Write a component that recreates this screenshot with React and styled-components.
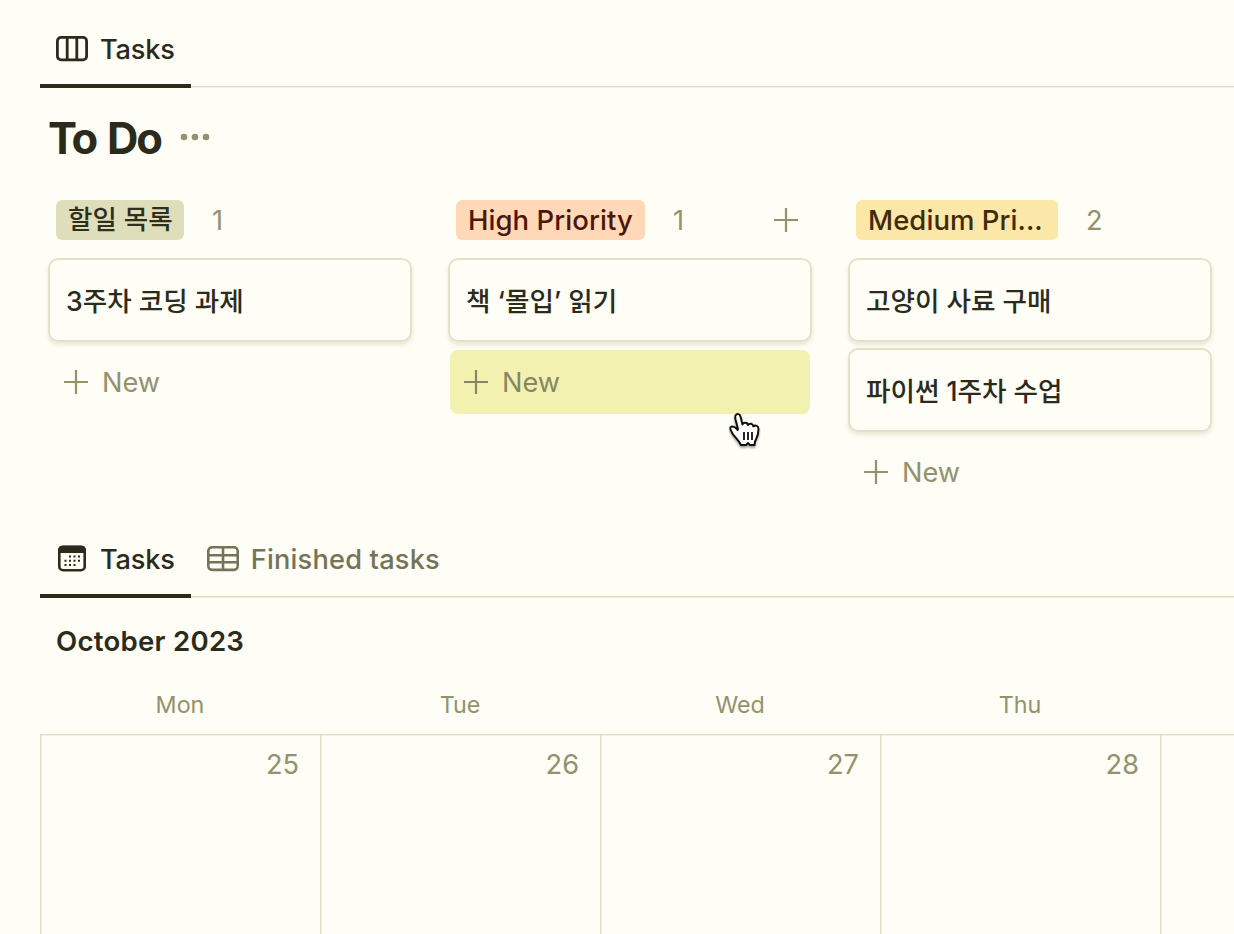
import React from "react";
import styled, { createGlobalStyle } from "styled-components";

const GlobalStyle = createGlobalStyle`
  * {
    box-sizing: border-box;
  }
  body {
    margin: 0;
    background: #fefdf6;
    color: #2b2b1c;
    font-family: "Inter", "Noto Sans CJK KR", sans-serif;
    overflow: hidden;
  }
`;

const Page = styled.div`
  width: 1234px;
  height: 934px;
  padding-left: 40px;
  position: relative;
  overflow: hidden;
  white-space: nowrap;
`;

const TabBar = styled.div`
  display: flex;
  height: 88px;
  padding-top: 14px;
  box-shadow: inset 0 -1px 0 #f0f0dc, inset 0 -2px 0 #dedec6;
`;

const Tab = styled.div`
  display: flex;
  align-items: center;
  padding: 0 16px;
  height: 74px;
  gap: 12px;
  border-bottom: 4px solid ${(props) => (props.$active ? "#2b2b1a" : "transparent")};
  color: ${(props) => (props.$active ? "#2b2b1c" : "#747456")};
  font-size: 27.2px;
  font-weight: 500;
  letter-spacing: ${(props) => (props.$active ? "-0.2px" : "0.2px")};

  svg {
    flex: none;
    margin-bottom: 1px;
  }
`;

const TitleRow = styled.div`
  display: flex;
  align-items: center;
  height: 100px;
  padding-left: 8px;
  gap: 18px;
`;

const Title = styled.h1`
  margin: 0;
  width: 114px;
  font-size: 43.5px;
  font-weight: 700;
  letter-spacing: -2.2px;
  word-spacing: 3px;
`;

const Board = styled.div`
  display: flex;
  gap: 36px;
  height: 322px;
  padding: 12px 0 0 8px;
`;

const Column = styled.div`
  flex: none;
  width: 364px;
`;

const ColumnHeader = styled.div`
  display: flex;
  align-items: center;
  height: 40px;
  margin-bottom: 18px;
  padding: 0 14px 0 8px;
`;

const Tag = styled.span`
  width: ${(props) => props.$width}px;
  height: 40px;
  padding: 0 12px;
  border-radius: 6px;
  background: ${(props) => props.$bg};
  color: ${(props) => props.$color};
  font-size: ${(props) => (props.$korean ? "26.5px" : "27.5px")};
  font-weight: 500;
  line-height: ${(props) => (props.$korean ? "39px" : "41px")};
  letter-spacing: ${(props) => (props.$korean ? "0" : "0.05px")};
`;

const Count = styled.span`
  flex: 1;
  margin-left: 28px;
  font-size: 27.2px;
  color: #92926c;
`;

const AddButton = styled.span`
  display: flex;
  color: #92926c;
`;

const Card = styled.div`
  display: flex;
  align-items: center;
  height: 84px;
  margin-bottom: 6px;
  border: 2px solid #e2e2cb;
  border-radius: 10px;
  padding: 0 16px 2px;
  font-size: 26.6px;
  font-weight: 500;
  box-shadow: 0 3px 4px rgba(110, 110, 0, 0.14);
`;

const NewButton = styled.div`
  display: flex;
  align-items: center;
  gap: 14px;
  height: 64px;
  margin: 8px 2px 0;
  padding-left: 14px;
  border-radius: 8px;
  background: ${(props) => (props.$hover ? "#f2f1b0" : "transparent")};
  color: ${(props) => (props.$hover ? "#878762" : "#92926c")};
  font-size: 27.2px;
`;

const Month = styled.div`
  height: 88px;
  padding-left: 16px;
  line-height: 86px;
  font-size: 27.6px;
  font-weight: 600;
  letter-spacing: 0.25px;
`;

const Week = styled.div`
  display: grid;
  grid-template-columns: repeat(5, 280px);
  width: 1400px;
`;

const Weekday = styled.div`
  height: 48px;
  line-height: 38px;
  text-align: center;
  font-size: 23.3px;
  color: #92926c;
`;

const Day = styled.div`
  height: 200px;
  padding: 16px 21px 0 0;
  box-shadow: inset 1px 1px 0 #dedec6, inset 2px 2px 0 #f0f0dc;
  text-align: right;
  line-height: 30px;
  font-size: 27.2px;
  color: #92926c;
`;

const Pointer = styled.svg`
  position: absolute;
  left: 728px;
  top: 411px;
  filter: drop-shadow(0 2px 1px rgba(0, 0, 0, 0.35));
`;

const BoardIcon = () => (
  <svg width="32" height="26" viewBox="0 0 32 26" fill="none" stroke="currentColor" strokeWidth="2.8">
    <rect x="1.4" y="1.4" width="29.2" height="22.4" rx="3.6" />
    <path d="M11.2 2v22M20.8 2v22" />
  </svg>
);

const CalendarIcon = () => (
  <svg width="32" height="28" viewBox="0 0 32 28" fill="none">
    <rect x="3.3" y="2" width="25.4" height="23.2" rx="3.8" stroke="currentColor" strokeWidth="2.6" />
    <path d="M2 8V5.600q0-5 5-5h18q5 0 5 5v2.400z" fill="currentColor" />
    <path
      d="M13 11.500h2M17.500 11.500h2M22 11.500h2M8.500 15.700h2M13 15.700h2M17.500 15.700h2M22 15.700h2M8.500 20h2M13 20h2M17.500 20h2"
      stroke="currentColor"
      strokeWidth="2"
    />
  </svg>
);

const TableIcon = () => (
  <svg width="32" height="26" viewBox="0 0 32 26" fill="none" stroke="currentColor" strokeWidth="2.6">
    <rect x="1.3" y="1.3" width="29.4" height="22.6" rx="3.8" />
    <path d="M2 9.2h28M2 16.2h28M16 2v22" />
  </svg>
);

const PlusIcon = () => (
  <svg width="24" height="24" viewBox="0 0 24 24" stroke="currentColor" strokeWidth="2.2">
    <path d="M0 12h24M12 0v24" />
  </svg>
);

const DotsIcon = () => (
  <svg width="30" height="10" viewBox="0 0 30 10" fill="#92926c">
    <circle cx="4" cy="4" r="3.3" />
    <circle cx="15" cy="4" r="3.3" />
    <circle cx="26" cy="4" r="3.3" />
  </svg>
);

const columns = [
  {
    name: "할일 목록",
    korean: true,
    width: 128,
    bg: "#dfdeba",
    color: "#2f2f1c",
    tasks: ["3주차 코딩 과제"],
  },
  {
    name: "High Priority",
    width: 189,
    bg: "#ffd9b7",
    color: "#4d1505",
    tasks: ["책 ‘몰입’ 읽기"],
    hover: true,
  },
  {
    name: "Medium Pri...",
    width: 202,
    bg: "#fbe7a8",
    color: "#402a08",
    tasks: ["고양이 사료 구매", "파이썬 1주차 수업"],
  },
];

const days = [
  { name: "Mon", date: 25 },
  { name: "Tue", date: 26 },
  { name: "Wed", date: 27 },
  { name: "Thu", date: 28 },
  { name: "", date: "" },
];

function App() {
  return (
    <>
      <GlobalStyle />
      <Page>
        <TabBar>
          <Tab $active>
            <BoardIcon />
            Tasks
          </Tab>
        </TabBar>
        <TitleRow>
          <Title>To Do</Title>
          <DotsIcon />
        </TitleRow>
        <Board>
          {columns.map((column) => (
            <Column key={column.name}>
              <ColumnHeader>
                <Tag
                  $width={column.width}
                  $bg={column.bg}
                  $color={column.color}
                  $korean={column.korean}
                >
                  {column.name}
                </Tag>
                <Count>{column.tasks.length}</Count>
                {column.hover && (
                  <AddButton>
                    <PlusIcon />
                  </AddButton>
                )}
              </ColumnHeader>
              {column.tasks.map((task) => (
                <Card key={task}>{task}</Card>
              ))}
              <NewButton $hover={column.hover}>
                <PlusIcon />
                New
              </NewButton>
            </Column>
          ))}
        </Board>
        <TabBar>
          <Tab $active>
            <CalendarIcon />
            Tasks
          </Tab>
          <Tab>
            <TableIcon />
            Finished tasks
          </Tab>
        </TabBar>
        <Month>October 2023</Month>
        <Week>
          {days.map((day) => (
            <Weekday key={day.name}>{day.name}</Weekday>
          ))}
          {days.map((day) => (
            <Day key={day.name}>{day.date}</Day>
          ))}
        </Week>
        <Pointer width="34" height="38" viewBox="0 0 34 38">
          <path
            d="M7.5 4.5C9 2 12 3 12.5 5.5L14.5 13.5C15.5 11 19.5 11.2 20 14C21.5 11.8 25 12.5 25.3 15.3C27.5 13.8 30.5 15 30.5 18C30.5 25 28.5 27 27 30.5L26.5 34H22L20 32L18 34H13C11 29.5 7 26.5 4.5 22.5C2.5 19 1.5 17.5 2.5 16.3C4.5 14.5 7.5 16 9.5 19L10 18L7.5 8.5C7.2 7 7 5.8 7.5 4.5Z"
            fill="#fff"
            stroke="#111"
            strokeWidth="2"
            strokeLinejoin="round"
          />
          <path d="M16 21v8M20 21v8M24 21v8" stroke="#111" strokeWidth="1.8" />
        </Pointer>
      </Page>
    </>
  );
}

export default App;
